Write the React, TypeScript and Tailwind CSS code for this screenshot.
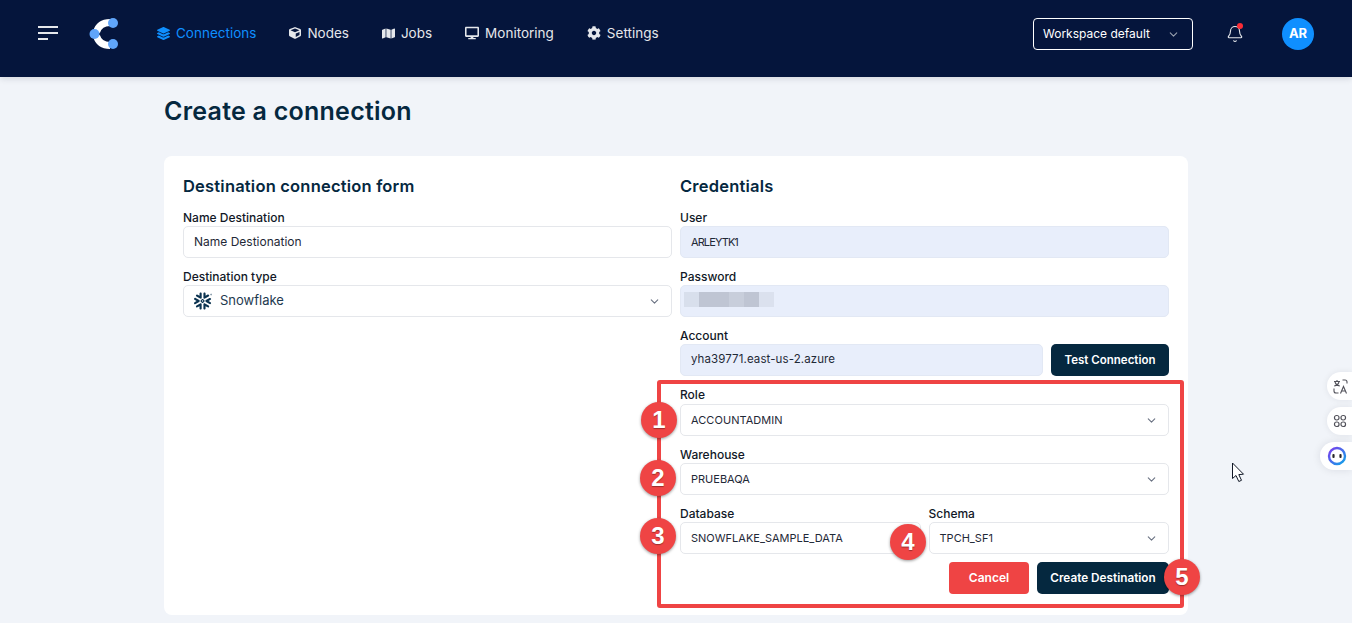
import { ChevronDown, Bell } from "lucide-react";
import { FaCog, FaCube, FaDesktop, FaLayerGroup } from "react-icons/fa";
import { FaMap } from "react-icons/fa6";
import { SiSnowflake } from "react-icons/si";
import type { ReactNode } from "react";

const font = { fontFamily: "Inter, 'Noto Sans', sans-serif" };

const navItems = [
  { label: "Connections", icon: <FaLayerGroup size={13} />, active: true },
  { label: "Nodes", icon: <FaCube size={12} /> },
  { label: "Jobs", icon: <FaMap size={13} /> },
  { label: "Monitoring", icon: <FaDesktop size={14} /> },
  { label: "Settings", icon: <FaCog size={14} /> },
];

const Logo = () => (
  <svg width="36" height="36" viewBox="0 0 36 36" fill="none">
    <path d="M22 6.5 C14 6.5 10 11 8.5 16" stroke="#fff" strokeWidth="7" />
    <path d="M8.5 20 C10 25 14 29.5 22 29.5" stroke="#fff" strokeWidth="7" />
    <circle cx="6.5" cy="18" r="5" fill="#60a5fa" />
    <circle cx="25" cy="7" r="5" fill="#60a5fa" />
    <circle cx="25" cy="28" r="5" fill="#60a5fa" />
  </svg>
);

const Header = () => (
  <header className="flex h-[77px] items-start bg-[#05153c] pl-[38px] pr-[38px] pt-[18px] shadow-[0_2px_6px_rgba(15,23,42,0.12)]">
    <div className="mt-[8px] flex w-[20px] flex-col gap-[4px]">
      <span className="h-[2px] w-[20px] bg-gray-200" />
      <span className="h-[2px] w-[20px] bg-gray-200" />
      <span className="h-[2px] w-[10px] bg-gray-200" />
    </div>
    <div className="ml-[30px] mt-[-2px]">
      <Logo />
    </div>
    <nav className="ml-[33px] flex h-[30px] items-center gap-[33px]">
      {navItems.map((item) => (
        <div
          key={item.label}
          className={`flex items-center gap-[6px] text-[13.5px] ${item.active ? "text-[#0f8fff]" : "text-gray-200"}`}
        >
          {item.icon}
          <span>{item.label}</span>
        </div>
      ))}
    </nav>
    <div className="ml-auto flex items-center">
      <div className="flex h-[32px] w-[160px] items-center justify-between rounded-[4px] border border-white pl-[9px] pr-[12px] text-[12px] text-white">
        <span>Workspace default</span>
        <ChevronDown size={13} className="text-gray-400" />
      </div>
      <div className="relative ml-[33px] text-gray-200">
        <Bell size={18} strokeWidth={1.5} />
        <span className="absolute right-[1px] top-[-2px] h-[6px] w-[6px] rounded-full bg-red-500" />
      </div>
      <div className="ml-[38px] flex h-[32px] w-[32px] items-center justify-center rounded-full bg-[#0f8fff] text-[13px] font-bold text-white">
        AR
      </div>
    </div>
  </header>
);

const Field = ({ label, className = "", children }: { label: string; className?: string; children: ReactNode }) => (
  <div className={className}>
    <div className="h-[18px] text-[12px] font-medium leading-[20px] text-[#111827]">{label}</div>
    {children}
  </div>
);

const Input = ({
  value,
  filled,
  select,
  className = "",
  textClass = "text-[11px]",
}: {
  value?: ReactNode;
  filled?: boolean;
  select?: boolean;
  className?: string;
  textClass?: string;
}) => (
  <div
    className={`flex h-[32px] items-center justify-between rounded-[5px] border pl-[10px] pr-[10px] text-[#1f2937] ${
      filled ? "border-[#e2e8f4] bg-[#e8eefb]" : "border-[#e5e7eb] bg-white"
    } ${className}`}
  >
    <span className={textClass}>{value}</span>
    {select && <ChevronDown size={13} className="text-gray-500" />}
  </div>
);

const Badge = ({ n, className }: { n: number; className: string }) => (
  <div
    className={`absolute flex h-[36px] w-[36px] items-center justify-center rounded-full bg-[#ef4444] text-[24px] font-bold text-white shadow-[0_1px_3px_rgba(0,0,0,0.4)] ${className}`}
    style={{ fontFamily: "'Liberation Sans', sans-serif", textShadow: "0 1px 1px rgba(0,0,0,0.35)" }}
  >
    {n}
  </div>
);

const blur = ["bg-[#d8dfec]", "bg-[#bfc5d3]", "bg-[#bfc5d3]", "bg-[#c8cedb]", "bg-[#bfc5d3]", "bg-[#dbe1ee]"];

const headingClass = "h-[22px] text-[16.5px] font-semibold leading-[22px] tracking-[0.2px] text-[#05283f]";

const Card = () => (
  <div className="relative grid grid-cols-2 gap-x-[8px] rounded-[8px] bg-white px-[19px] pb-[21px] pt-[19px]">
    <div>
      <h2 className={headingClass}>Destination connection form</h2>
      <Field label="Name Destination" className="mt-[11px]">
        <Input value="Name Destionation" textClass="text-[12px]" />
      </Field>
      <Field label="Destination type" className="mt-[9px]">
        <Input
          select
          textClass="text-[13px]"
          value={
            <span className="flex items-center gap-[8px] text-[#1e3a4f]">
              <SiSnowflake size={18} className="text-[#0b3350]" />
              Snowflake
            </span>
          }
        />
      </Field>
    </div>

    <div>
      <h2 className={headingClass}>Credentials</h2>
      <Field label="User" className="mt-[11px]">
        <Input filled value="ARLEYTK1" textClass="text-[11px] tracking-[-0.9px]" />
      </Field>
      <Field label="Password" className="mt-[9px]">
        <div className="relative">
          <Input filled />
          <div className="absolute left-[4px] top-[7px] flex">
            {blur.map((c, i) => (
              <span key={i} className={`h-[15px] w-[15px] ${c}`} />
            ))}
          </div>
        </div>
      </Field>
      <Field label="Account" className="mt-[9px]">
        <div className="flex gap-[8px]">
          <Input filled value="yha39771.east-us-2.azure" className="flex-1" textClass="text-[11.5px] tracking-[0.1px]" />
          <button className="h-[32px] w-[118px] rounded-[5px] bg-[#05283f] pt-px text-[11.5px] font-semibold text-white">
            Test Connection
          </button>
        </div>
      </Field>
      <Field label="Role" className="mt-[9px]">
        <Input select value="ACCOUNTADMIN" className="mt-px" textClass="text-[11px] tracking-[0.05px]" />
      </Field>
      <Field label="Warehouse" className="mt-[9px]">
        <Input select value="PRUEBAQA" />
      </Field>
      <div className="mt-[9px] grid grid-cols-2 gap-x-[8px]">
        <Field label="Database">
          <Input value="SNOWFLAKE_SAMPLE_DATA" />
        </Field>
        <Field label="Schema">
          <Input select value="TPCH_SF1" />
        </Field>
      </div>
      <div className="mt-[8px] flex justify-end gap-[8px]">
        <button className="h-[32px] w-[80px] rounded-[4px] bg-[#ef4444] text-[12px] font-semibold text-white">Cancel</button>
        <button className="h-[32px] w-[132px] rounded-[5px] bg-[#05283f] pt-px text-[11.75px] font-semibold text-white">
          Create Destination
        </button>
      </div>
    </div>

    {/* tutorial annotations drawn over the form */}
    <div className="pointer-events-none absolute left-[493px] top-[224px] h-[228px] w-[527px] rounded-[3px] border-[4px] border-[#ef4444]" />
    <Badge n={1} className="left-[477px] top-[246px]" />
    <Badge n={2} className="left-[476px] top-[304px]" />
    <Badge n={3} className="left-[476px] top-[362px]" />
    <Badge n={4} className="left-[726px] top-[368px]" />
    <Badge n={5} className="left-[1000px] top-[403px]" />
  </div>
);

const TranslateIcon = () => (
  <svg width="15" height="15" viewBox="0 0 15 15" fill="none" stroke="#52525b" strokeWidth="1.1">
    <path d="M1 2.5 H7 M4 1 V2.5 M2 3 C2.5 5 4.5 6.5 6.8 7 M6 3 C5.5 5 3.5 6.5 1.2 7" />
    <path d="M9.5 1 H12 A2 2 0 0 1 14 3 V4.5" />
    <path d="M1 9.5 V12 A2 2 0 0 0 3 14 H5.5" />
    <path d="M7.5 14.5 L10.5 7.5 L13.5 14.5 M8.6 12 H12.4" />
  </svg>
);

const SideWidgets = () => (
  <>
    <div className="absolute left-[1327px] top-[372px] flex h-[28px] w-[25px] items-center rounded-l-full bg-white pl-[6px] shadow-[0_0_6px_rgba(15,23,42,0.08)]">
      <TranslateIcon />
    </div>
    <div className="absolute left-[1327px] top-[407px] flex h-[28px] w-[25px] items-center rounded-l-full bg-white pl-[6px] shadow-[0_0_6px_rgba(15,23,42,0.08)]">
      <svg width="14" height="14" viewBox="0 0 14 14" fill="none" stroke="#52525b" strokeWidth="1.2">
        <rect x="1.5" y="1.5" width="4.5" height="4.5" rx="2" />
        <rect x="8" y="1.5" width="4.5" height="4.5" rx="2" />
        <rect x="1.5" y="8" width="4.5" height="4.5" rx="2" />
        <rect x="8" y="8" width="4.5" height="4.5" rx="2" />
      </svg>
    </div>
    <div className="absolute left-[1320px] top-[442px] flex h-[28px] w-[32px] items-center rounded-l-full bg-white pl-[7px] shadow-[0_0_8px_rgba(15,23,42,0.1)]">
      <svg width="20" height="20" viewBox="0 0 20 20" fill="none">
        <defs>
          <linearGradient id="ring" x1="0" y1="0" x2="1" y2="1">
            <stop offset="0" stopColor="#7c3aed" />
            <stop offset="1" stopColor="#0ea5e9" />
          </linearGradient>
        </defs>
        <circle cx="10" cy="10" r="8" stroke="url(#ring)" strokeWidth="2.4" />
        <rect x="5.4" y="8" width="2.2" height="4" rx="1" fill="#27272a" />
        <rect x="12.4" y="8" width="2.2" height="4" rx="1" fill="#27272a" />
      </svg>
    </div>
  </>
);

const Cursor = () => (
  <svg className="absolute left-[1231px] top-[462px]" width="15" height="21" viewBox="0 0 15 21">
    <path d="M1.5 1 V16.5 L5 13.5 L7.8 19.5 L10.5 18.3 L7.8 12.6 L12.5 12.2 Z" fill="#fff" stroke="#111827" strokeWidth="1" strokeLinejoin="round" />
  </svg>
);

export default function App() {
  return (
    <div className="relative h-[623px] overflow-hidden bg-[#f1f4f9]" style={font}>
      <Header />
      <main className="mx-auto w-[1024px]">
        <h1 className="mb-[31px] mt-[20px] h-[28px] text-[25px] font-semibold leading-[28px] tracking-[0.25px] text-[#05283f]">
          Create a connection
        </h1>
        <Card />
      </main>
      <SideWidgets />
      <Cursor />
    </div>
  );
}
